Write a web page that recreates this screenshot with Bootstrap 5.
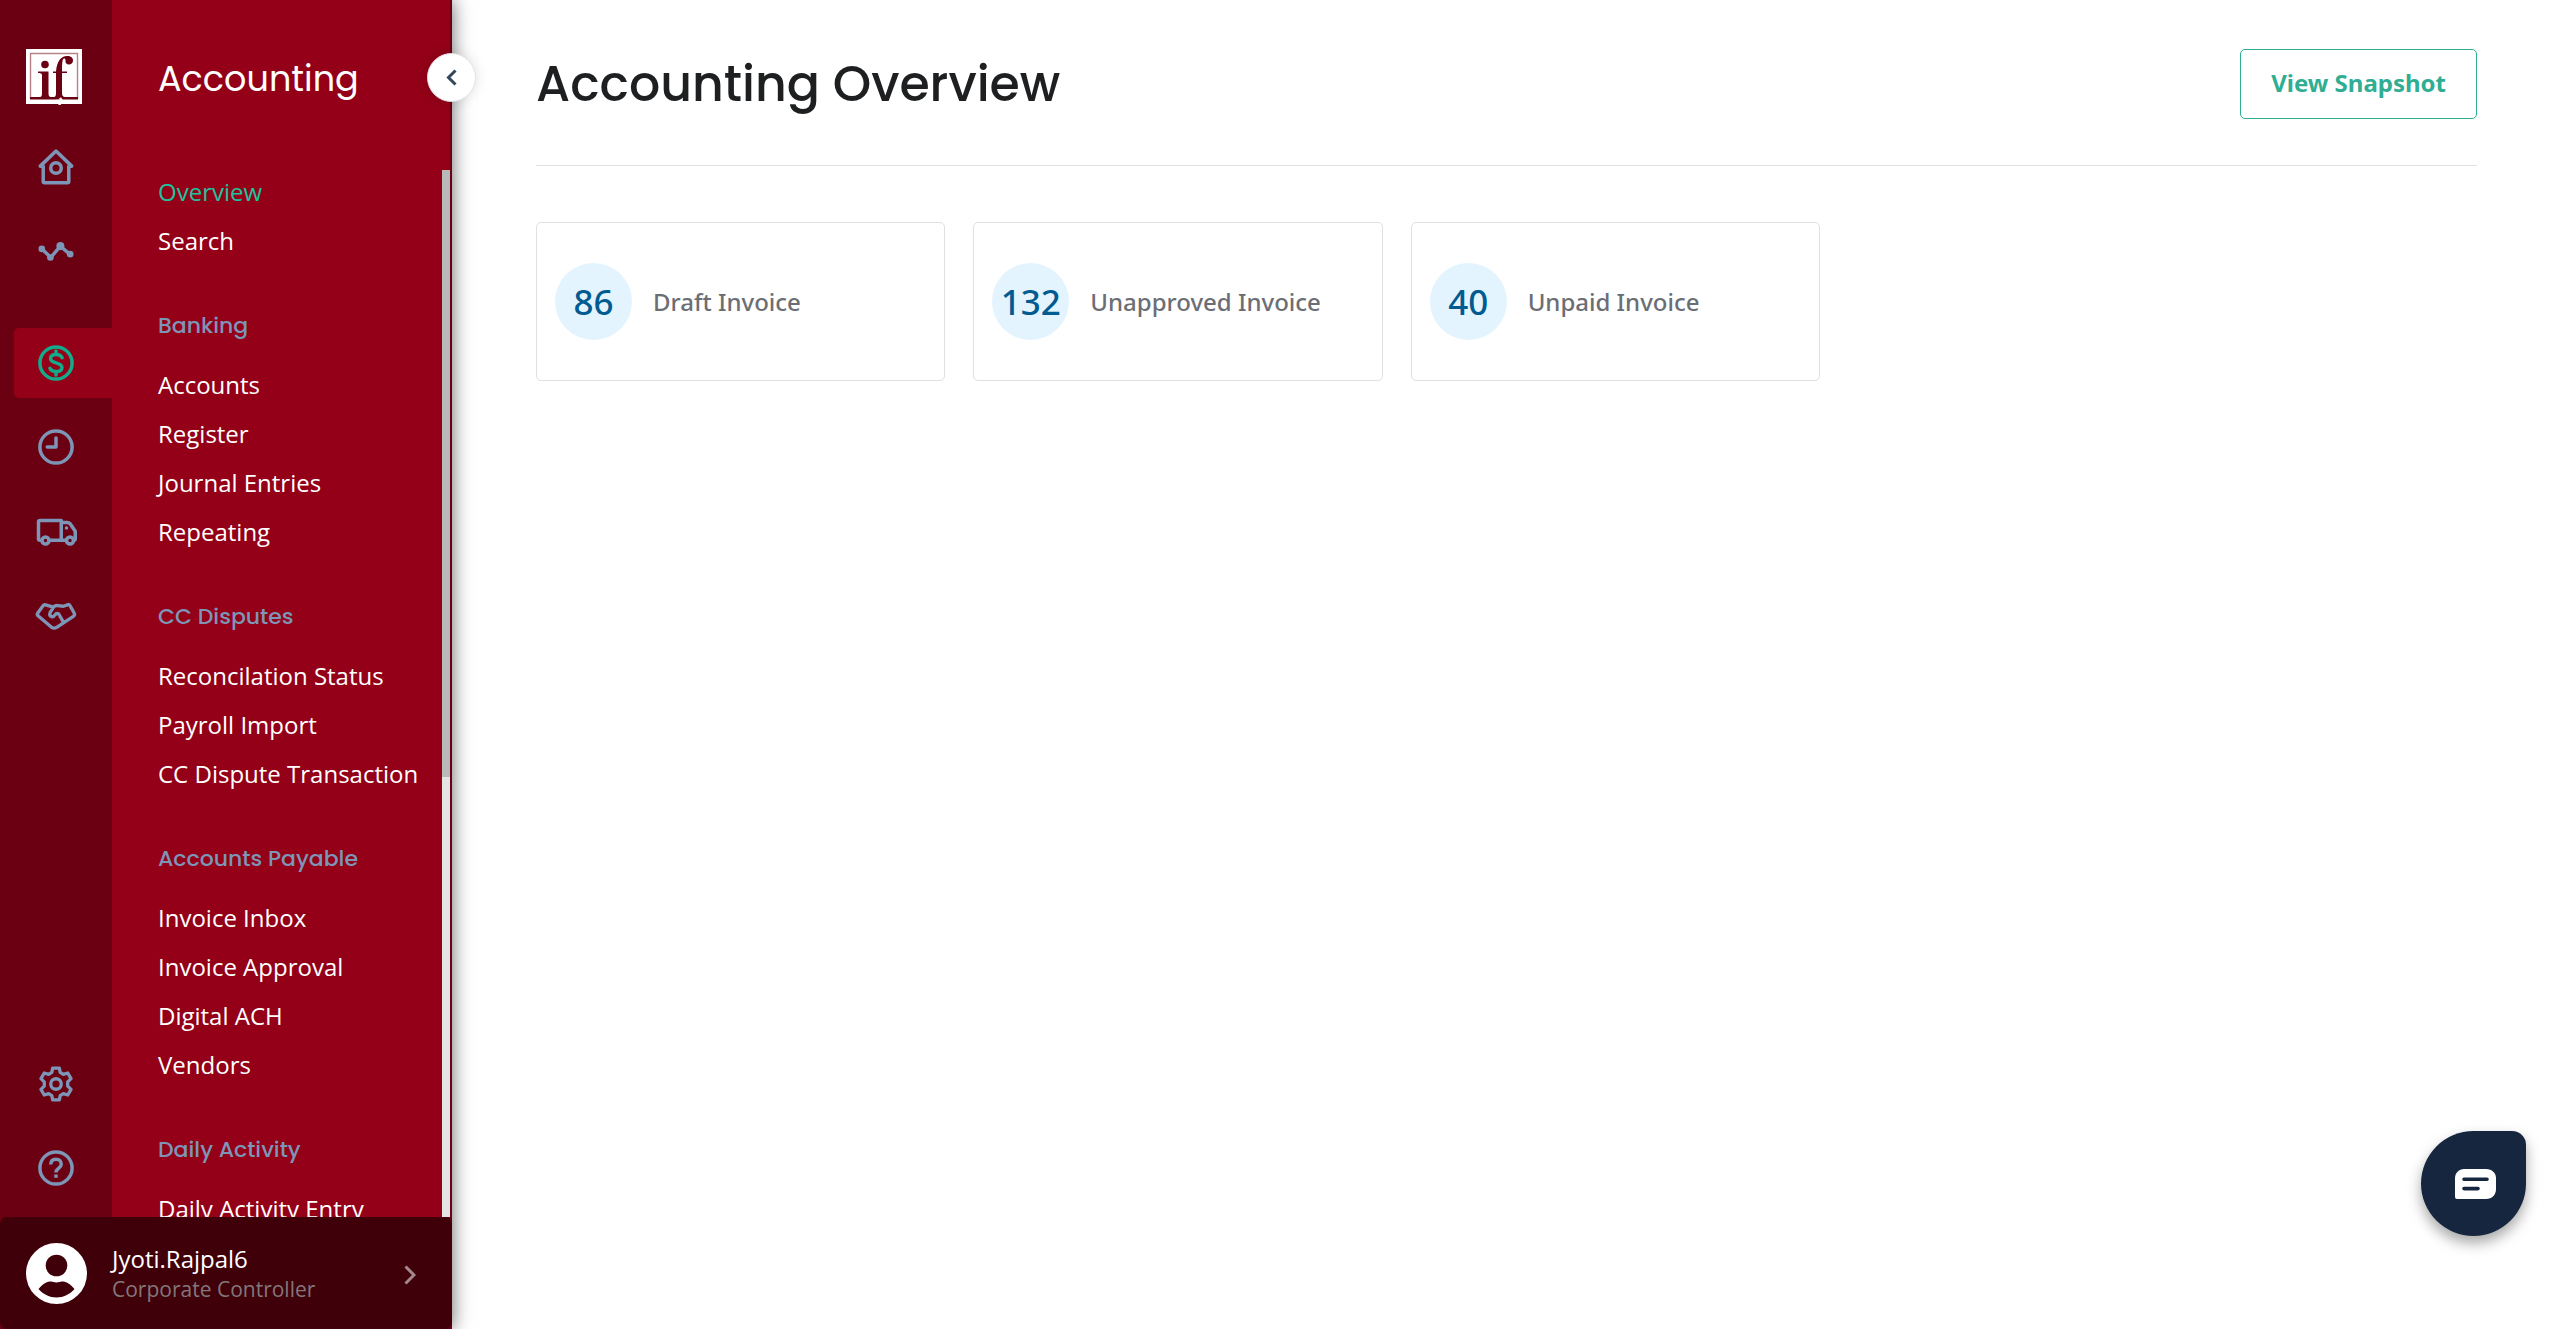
<!DOCTYPE html>
<html lang="en">
<head>
<meta charset="utf-8">
<meta name="viewport" content="width=device-width, initial-scale=1">
<title>Accounting Overview</title>
<link href="https://cdn.jsdelivr.net/npm/bootstrap@5.3.0/dist/css/bootstrap.min.css" rel="stylesheet">
<style>
  :root {
    --brand: #930017;
    --brand-dark: #6a0011;
    --brand-deep: #3f0009;
    --muted-blue: #7d95b6;
    --green: #2fae93;
    --display: Poppins, Inter, "Liberation Sans", sans-serif;
  }
  body { font-family: "Noto Sans", "Open Sans", sans-serif; font-size: 24px; line-height: 32px; color: #1d1f21; background: #fff; }
  a { text-decoration: none; }
  svg { display: block; }

  .sidebar { width: 452px; background: var(--brand-dark); box-shadow: 0 0 18px rgba(0,0,0,.6); z-index: 2; }
  .rail { width: 112px; padding: 49px 0 14px; }
  .rail-logo { width: 56px; height: 56px; margin: 0 0 13px 26px; }
  .rail-link { width: 98px; height: 70px; padding-left: 21px; margin: 14px 0 0 14px; color: var(--muted-blue); border-radius: 5px 0 0 5px; }
  .rail-link.active { background: var(--brand); color: #13ab8b; margin-top: 42px; }
  .panel { background: var(--brand); margin-right: 2px; }
  .panel-title { font-family: var(--display); font-size: 35px; line-height: 42px; font-weight: 400; color: #fff; padding: 58px 0 70px 46px; margin: 0; }
  .menu-list { padding-left: 46px; }
  .menu-list a { display: block; height: 49px; line-height: 43px; color: #fff; white-space: nowrap; font-family: "Open Sans", "Noto Sans", sans-serif; }
  .menu-list a.active { color: #1dc39e; }
  .menu-list h2 { font-family: var(--display); font-size: 22px; line-height: 28px; font-weight: 500; color: var(--muted-blue); margin: 0; padding: 44px 0 23px; }
  .track { width: 8px; background: #e4e4e4; }
  .thumb { height: 58%; background: #b9b9b9; }
  .profile { height: 112px; background: var(--brand-deep); color: #fff; border: 0; border-radius: 7px; padding: 0 36px 0 26px; gap: 25px; font-family: "Open Sans", "Noto Sans", sans-serif; }
  .profile-role { font-size: 21px; line-height: 28px; color: #83777a; }
  .collapse-btn { position: absolute; top: 53px; right: -24px; width: 49px; height: 49px; border: 1px solid #dfe3e8; background: #fff; color: #33475b; box-shadow: 0 0 14px rgba(0,0,0,.12); }

  .main-area { padding: 49px 84px; }
  .page-head { padding-bottom: 46px; border-bottom: 1px solid #e0e0e0; margin-bottom: 56px; }
  .page-head h1 { font-family: var(--display); font-size: 49px; line-height: 70px; font-weight: 500; margin: 0; }
  .btn-snapshot { height: 70px; padding: 0 30px 2px; border: 1px solid var(--green); border-radius: 5px; color: var(--green); font-size: 24px; font-weight: 700; }
  .btn-snapshot:hover { background: var(--green); color: #fff; }
  .stats { --bs-gutter-x: 28px; max-width: 1312px; }
  .stat { height: 159px; border: 1px solid #dee0e3; border-radius: 5px; padding-left: 18px; gap: 21px; color: #6b6e74; font-weight: 500; }
  .stat-num { width: 77px; height: 77px; background: #e3f4ff; color: #005b91; font-size: 35px; }
  .chat { position: fixed; right: 35px; bottom: 93px; width: 105px; height: 105px; background: #17263f; border: 0; border-radius: 50% 14px 50% 50%; box-shadow: 0 7px 14px rgba(0,0,0,.35); }
</style>
</head>
<body>
<div class="d-flex vh-100 overflow-hidden">
  <aside class="sidebar d-flex flex-column flex-shrink-0 position-relative">
    <div class="d-flex flex-grow-1 overflow-hidden">
      <nav class="rail d-flex flex-column flex-shrink-0" aria-label="Modules">
        <a href="#" class="rail-logo" aria-label="Home page">
          <svg width="56" height="56" viewBox="0 0 56 56"><path fill="#fff" d="M0 0h56v55H0z"/><path d="M4.500 50V4.500h47V50" fill="none" stroke="#b98289" stroke-width="1.400"/><path fill="#6a0011" d="M4 48h48v2.500H4zM12 22.500h10.500V44c0 2.500.5 4 2.500 4H14c1.500 0 2-1.500 2-4V26c0-1.500-1.500-2-4-2zM30 24h-3v-1.500h3C31 12 35 7 41 7c4 0 6 2 6 4.500s-2 4-4 4c-2.500 0-4-2-3.500-4 0-1.500-.5-2-1.500-2-1.500 0-2 4-2 13h5V24h-5v20c0 2.500 1 4 3 4H28c1.500 0 2-1.500 2-4z"/><circle cx="19" cy="15.500" r="3.800" fill="#6a0011"/><path d="M30 52h6m-2-3 2 3-3 4" fill="none" stroke="#fff" stroke-width="2.400"/></svg>
        </a>
        <a href="#" class="rail-link d-flex align-items-center" aria-label="Home">
          <svg width="42" height="42" viewBox="0 0 24 24" fill="none" stroke="currentColor" stroke-width="2" stroke-linecap="round" stroke-linejoin="round"><path d="M3 11.500 12 2.900l9 8.600h-1.700v8.800q0 .7-.7.700H5.400q-.7 0-.7-.7v-8.800z"/><circle cx="12" cy="12.600" r="3"/></svg>
        </a>
        <a href="#" class="rail-link d-flex align-items-center" aria-label="Trends">
          <svg width="42" height="42" viewBox="0 0 24 24" fill="none" stroke="currentColor" stroke-width="2"><path d="M4 10.800 9 15.700l5.500-6.500 5.500 4.700"/><g fill="currentColor" stroke="none"><circle cx="3.900" cy="10.800" r="1.900"/><circle cx="8.800" cy="15.700" r="1.900"/><circle cx="14.500" cy="9.200" r="2.300"/><circle cx="20.100" cy="13.800" r="1.900"/></g></svg>
        </a>
        <a href="#" class="rail-link active d-flex align-items-center" aria-label="Accounting" aria-current="page">
          <svg width="42" height="42" viewBox="0 0 24 24" fill="none" stroke="currentColor" stroke-width="2" stroke-linecap="round"><circle cx="12" cy="12" r="9.200"/><path d="M15.500 9c-.6-1.300-1.800-1.900-3.500-1.900-1.900 0-3.100.9-3.100 2.300 0 3.300 6.500 1.700 6.500 5.200 0 1.400-1.300 2.300-3.300 2.300-1.800 0-3-.7-3.600-1.900M12 5.100v1.800M12 17.100v1.800"/></svg>
        </a>
        <a href="#" class="rail-link d-flex align-items-center" aria-label="Time">
          <svg width="42" height="42" viewBox="0 0 24 24" fill="none" stroke="currentColor" stroke-width="2" stroke-linecap="round" stroke-linejoin="round"><circle cx="12" cy="12" r="9.200"/><path d="M12 6.900V12H7"/></svg>
        </a>
        <a href="#" class="rail-link d-flex align-items-center" aria-label="Logistics">
          <svg class="overflow-visible" width="42" height="42" viewBox="0 0 24 24" fill="none" stroke="currentColor" stroke-width="2" stroke-linejoin="round"><path d="M3.700 17.300H2.900q-.9 0-.9-.9V6.900q0-.9.900-.9H15v11.300H8M15 7.100h3.300q1.200 0 1.800.8l2.900 4.300v4.200q0 .9-.9.900M15 17.300h3"/><circle cx="6" cy="17.400" r="2"/><circle cx="20" cy="17.400" r="2"/><circle cx="18" cy="10.300" r="1" fill="currentColor" stroke="none"/></svg>
        </a>
        <a href="#" class="rail-link d-flex align-items-center" aria-label="Partners">
          <svg class="overflow-visible" width="42" height="42" viewBox="0 0 24 24" fill="none" stroke="currentColor" stroke-width="1.900" stroke-linecap="round" stroke-linejoin="round"><path d="M10 7.400 6 6.200q-.9-.2-1.400.5L1.600 10.800q-.7 1 .3 1.800l7.400 6.300q1.400 1 2.900.3l9.700-6.400q1.100-.8.500-1.900L19.900 6.500q-.5-.8-1.400-.3l-2.200.8-3.500-.4q-1.300-.1-2.100.8L8.600 10.700q-.6 1.600.8 2.200 1.300.4 2.200-1.200.9-.9 2-.3l2.600 4.700"/></svg>
        </a>
        <a href="#" class="rail-link d-flex align-items-center mt-auto" aria-label="Settings">
          <svg width="42" height="42" viewBox="0 0 24 24" fill="none" stroke="currentColor" stroke-width="1.900" stroke-linejoin="round"><path d="M10.100 2.900h3.800l.5 2.500 1.800 1.100 2.500-.8 1.900 3.200-1.900 1.900v2.400l1.900 1.900-1.900 3.200-2.500-.8-1.800 1.100-.5 2.500h-3.800l-.5-2.500-1.800-1.100-2.500.8-1.900-3.200 1.900-1.900v-2.400L3.400 8.900l1.900-3.200 2.500.8 1.800-1.100z"/><circle cx="12" cy="12" r="3"/></svg>
        </a>
        <a href="#" class="rail-link d-flex align-items-center" aria-label="Help">
          <svg width="42" height="42" viewBox="0 0 24 24" fill="none" stroke="currentColor" stroke-width="2"><circle cx="12" cy="12" r="9.200"/><path d="M9 10c0-1.900 1.200-3 3-3s3 1.100 3 2.800c0 2.200-3 2.300-3 4.700"/><path d="M11 15.700h2v1.900h-2z" fill="currentColor" stroke="none"/></svg>
        </a>
      </nav>
      <div class="panel d-flex flex-column flex-grow-1">
        <p class="panel-title">Accounting</p>
        <div class="d-flex flex-grow-1 overflow-hidden">
          <nav class="menu-list flex-grow-1" aria-label="Accounting">
            <a href="#" class="active" aria-current="page">Overview</a>
            <a href="#">Search</a>
            <h2>Banking</h2>
            <a href="#">Accounts</a>
            <a href="#">Register</a>
            <a href="#">Journal Entries</a>
            <a href="#">Repeating</a>
            <h2>CC Disputes</h2>
            <a href="#">Reconcilation Status</a>
            <a href="#">Payroll Import</a>
            <a href="#">CC Dispute Transaction</a>
            <h2>Accounts Payable</h2>
            <a href="#">Invoice Inbox</a>
            <a href="#">Invoice Approval</a>
            <a href="#">Digital ACH</a>
            <a href="#">Vendors</a>
            <h2>Daily Activity</h2>
            <a href="#">Daily Activity Entry</a>
          </nav>
          <div class="track flex-shrink-0"><div class="thumb"></div></div>
        </div>
      </div>
    </div>
    <button type="button" class="profile d-flex align-items-center flex-shrink-0 text-start">
      <svg width="61" height="61" viewBox="0 0 61 61"><circle cx="30.500" cy="30.500" r="30.500" fill="#fff"/><circle cx="30.500" cy="22.500" r="10.800" fill="#3f0009"/><path d="M12.500 46c5-6 9-7.500 12.500-7.500 2 0 3 .9 5.500.9s3.500-.9 5.500-.9c3.500 0 7.500 1.500 12.500 7.500-5 5.500-11 8.500-18 8.500s-13-3-18-8.500z" fill="#3f0009"/></svg>
      <span class="flex-grow-1"><span class="d-block">Jyoti.Rajpal6</span><span class="profile-role d-block">Corporate Controller</span></span>
      <svg class="mt-1" width="12" height="20" viewBox="0 0 12 20" fill="none" stroke="#a5878d" stroke-width="3"><path d="m1.500 1.500 8.500 8.500-8.500 8.500"/></svg>
    </button>
    <button type="button" class="collapse-btn rounded-circle d-flex align-items-center justify-content-center p-0" aria-label="Collapse menu">
      <svg width="11" height="17" viewBox="0 0 11 17" fill="none" stroke="currentColor" stroke-width="3"><path d="m9.500 1.500-7 7 7 7"/></svg>
    </button>
  </aside>
  <main class="main-area flex-grow-1">
    <header class="page-head d-flex align-items-center justify-content-between">
      <h1>Accounting Overview</h1>
      <button type="button" class="btn btn-snapshot">View Snapshot</button>
    </header>
    <div class="row stats">
      <div class="col-4"><div class="stat d-flex align-items-center"><span class="stat-num rounded-circle d-flex align-items-center justify-content-center">86</span><span>Draft Invoice</span></div></div>
      <div class="col-4"><div class="stat d-flex align-items-center"><span class="stat-num rounded-circle d-flex align-items-center justify-content-center">132</span><span>Unapproved Invoice</span></div></div>
      <div class="col-4"><div class="stat d-flex align-items-center"><span class="stat-num rounded-circle d-flex align-items-center justify-content-center">40</span><span>Unpaid Invoice</span></div></div>
    </div>
  </main>
</div>
<button type="button" class="chat d-flex align-items-center justify-content-center" aria-label="Open chat">
  <svg class="ms-1" width="41" height="30" viewBox="0 0 41 30"><path fill="#fff" d="M9 0h22c6 0 10 4 10 9v11c0 6-4 10-10 10H2q-2 0-2-2V9c0-5 4-9 9-9z"/><path d="M9 10.300h23M9 19.600h14" stroke="#17263f" stroke-width="3.600" stroke-linecap="round"/></svg>
</button>
<script src="https://cdn.jsdelivr.net/npm/bootstrap@5.3.0/dist/js/bootstrap.bundle.min.js"></script>
</body>
</html>
